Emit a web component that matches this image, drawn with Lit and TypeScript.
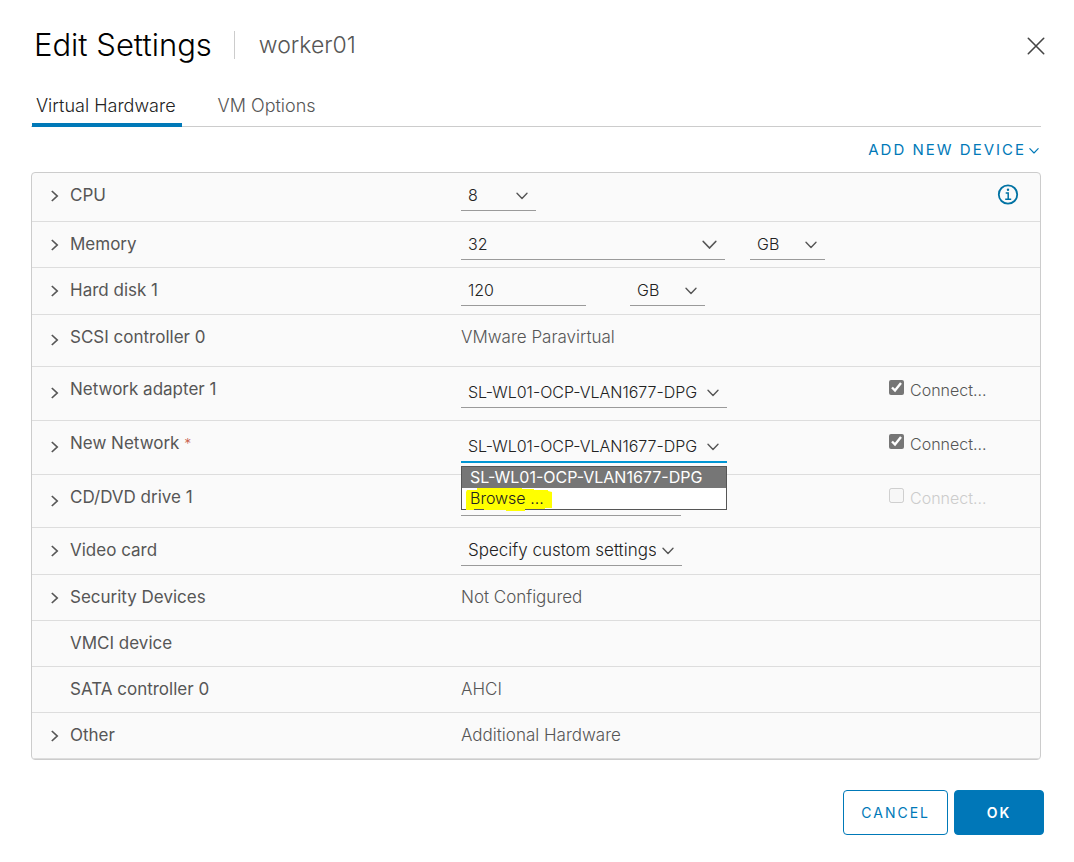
import { LitElement, html, css, nothing, TemplateResult } from "lit";
import { customElement, state } from "lit/decorators.js";
import { classMap } from "lit/directives/class-map.js";

type Row = {
  name: string;
  size: string;
  expandable?: boolean;
  required?: boolean;
  content?: () => TemplateResult;
  aside?: () => TemplateResult;
};

const chevronDown = (cls = "") => html`
  <svg class="caret ${cls}" viewBox="0 0 12 8" aria-hidden="true">
    <path d="M1 1.2 6 6.4 11 1.2" fill="none" stroke="currentColor" stroke-width="1.4" stroke-linecap="round" stroke-linejoin="round" />
  </svg>`;

const select = (id: string, label: string, cls: string, options: string[]) => html`
  <span class="control ${cls}">
    <select id=${id} aria-label=${label}>
      ${options.map((o) => html`<option>${o}</option>`)}
    </select>
    ${chevronDown()}
  </span>`;

const connect = (id: string, checked: boolean, disabled = false) => html`
  <label class=${classMap({ connect: true, disabled })} for=${id}>
    <input type="checkbox" id=${id} .checked=${checked} ?disabled=${disabled} />
    <span>Connect...</span>
  </label>`;

@customElement("app-root")
export class AppRoot extends LitElement {
  @state() private tab = "Virtual Hardware";

  static styles = css`
    :host {
      display: block;
      min-height: 100vh;
      box-sizing: border-box;
      padding: 24px 33px 27px 31px;
      background: #fff;
      color: #565656;
      font: 300 16px/24px Inter, "Open Sans", sans-serif;
    }
    button, input, select {
      font: inherit;
      color: inherit;
      margin: 0;
      padding: 0;
      border: 0;
      border-radius: 0;
      background: none;
    }
    button { cursor: pointer; }
    .header {
      display: flex;
      align-items: center;
      height: 42px;
    }
    h1 {
      margin: 0;
      padding: 0 22px 0 3px;
      font-size: 31px;
      line-height: 42px;
      font-weight: 300;
      color: #000;
    }
    .subject {
      display: flex;
      align-items: center;
      height: 28px;
      padding-left: 24px;
      border-left: 1px solid #ccc;
      font-size: 23px;
    }
    .close {
      display: flex;
      margin-left: auto;
      margin-right: -4px;
      padding-top: 2px;
      color: #454545;
    }
    .close svg { width: 18px; height: 18px; }
    .tabs {
      display: flex;
      gap: 31px;
      margin-top: 18px;
      box-shadow: inset 0 -1px #ccc;
    }
    .tab {
      padding: 10px 6px 5px 4px;
      margin-left: 1px;
      font-size: 18px;
      line-height: 24px;
      border-bottom: 4px solid transparent;
    }
    .tab.active {
      color: #222;
      border-color: #0079b8;
    }
    .toolbar {
      display: flex;
      justify-content: flex-end;
      padding: 11px 2px 10px;
    }
    .add {
      display: flex;
      align-items: center;
      gap: 3px;
      font-size: 15px;
      font-weight: 400;
      letter-spacing: 2px;
      color: #0079b8;
    }
    .add .caret { width: 10px; color: inherit; }
    .panel {
      border: 1px solid #ccc;
      border-radius: 4px;
      background: #fafafa;
    }
    .row {
      display: grid;
      grid-template-columns: 38px 391fr 428fr 151fr;
      min-height: 28px;
      padding-top: 10px;
      border-bottom: 1px solid #ddd;
    }
    .sm { padding-bottom: 7px; }
    .md { padding-bottom: 8px; }
    .lg { padding-bottom: 10px; }
    .xl { padding-bottom: 13px; }
    .net { padding-bottom: 12px; }
    .net .cell { padding-top: 3px; }
    .drive-row { padding-bottom: 11px; }
    .expand {
      align-self: center;
      justify-self: start;
      display: flex;
      margin-left: 18px;
      padding: 0 0 3px;
    }
    .net .expand, .xl .expand { margin-top: 4px; }
    .expand svg { width: 10px; height: 12px; }
    .name {
      grid-column: 2;
      font-size: 17px;
      font-weight: 400;
    }
    .star { color: #c8604c; font-size: 14px; font-weight: 300; }
    .cell {
      display: flex;
      align-items: flex-start;
    }
    .plain, .video { font-size: 17px; }
    .control {
      position: relative;
      display: grid;
      grid-template-columns: 1fr auto;
      align-items: center;
      box-sizing: border-box;
      height: 28px;
      padding-bottom: 3px;
      border-bottom: 1px solid #9a9a9a;
      color: #222;
    }
    .control select, .control input {
      grid-area: 1 / 1 / 2 / 3;
      appearance: none;
      width: 100%;
      min-width: 0;
      height: 24px;
      padding: 0 26px 0 7px;
      outline: 0;
    }
    .caret {
      width: 12px;
      height: 8px;
      margin-top: 1px;
      color: #565656;
    }
    .control .caret {
      grid-area: 1 / 2;
      margin-right: 8px;
      pointer-events: none;
    }
    .control .caret.wide { width: 15px; height: 10px; }
    .unit { width: 75px; }
    .memory { width: 264px; margin-right: 25px; }
    .disk { width: 125px; margin-right: 44px; }
    .network { width: 266px; }
    .focused {
      height: 29px;
      margin-bottom: -1px;
      border-bottom: 2px solid #0095d3;
    }
    .drive { width: 220px; }
    .video { width: 221px; }
    .menu {
      position: absolute;
      z-index: 1;
      top: 32px;
      left: 0;
      right: 0;
      margin: 0;
      padding: 0;
      list-style: none;
      border: 1px solid #565656;
      background: #fff;
      color: #222;
      line-height: 20px;
    }
    .menu li { padding: 0 8px 1px; }
    .menu .chosen {
      background: #767676;
      color: #fff;
      font-weight: 400;
    }
    .browse { display: grid; justify-content: start; }
    .browse svg {
      grid-area: 1 / 1;
      width: 86px;
      height: 23px;
      margin: 0 -8px -3px -4px;
    }
    .browse span { grid-area: 1 / 1; z-index: 1; }
    .connect {
      display: flex;
      align-items: flex-start;
      gap: 6px;
      margin-top: -2px;
    }
    .connect input {
      width: 15px;
      height: 15px;
      margin-top: 2px;
      accent-color: #767676;
    }
    .disabled { color: #ccc; }
    .info {
      display: flex;
      margin-left: auto;
      margin-right: 21px;
      color: #0072a3;
    }
    .info svg { width: 22px; height: 22px; }
    .footer {
      display: flex;
      justify-content: flex-end;
      gap: 6px;
      margin: 30px -3px 0 0;
    }
    .btn {
      min-width: 90px;
      padding: 10px 17px;
      border: 1px solid #0079b8;
      border-radius: 4px;
      font-size: 14px;
      line-height: 23px;
      font-weight: 400;
      letter-spacing: 2px;
      color: #0079b8;
    }
    .primary {
      background: #0077b8;
      color: #fff;
      font-weight: 600;
    }
  `;

  private rows: Row[] = [
    {
      name: "CPU", size: "lg", expandable: true,
      content: () => select("cpu", "CPU", "unit", ["8", "4", "16"]),
      aside: () => html`
        <button class="info" aria-label="CPU information">
          <svg viewBox="0 0 22 22" fill="none" stroke="currentColor" stroke-width="1.8">
            <circle cx="11" cy="11.5" r="9.2" />
            <path d="M8.7 10.1h2.5v6M8.2 16.3h6" stroke-width="1.5" />
            <circle cx="11" cy="6.7" r="1.2" fill="currentColor" stroke="none" />
          </svg>
        </button>`,
    },
    {
      name: "Memory", size: "sm", expandable: true,
      content: () => html`
        <span class="control memory">
          <input type="text" aria-label="Memory" value="32" />
          ${chevronDown("wide")}
        </span>
        ${select("memory-unit", "Memory unit", "unit", ["GB", "MB"])}`,
    },
    {
      name: "Hard disk 1", size: "md", expandable: true,
      content: () => html`
        <span class="control disk"><input type="text" aria-label="Hard disk 1" value="120" /></span>
        ${select("disk-unit", "Hard disk unit", "unit", ["GB", "MB", "TB"])}`,
    },
    { name: "SCSI controller 0", size: "xl", expandable: true, content: () => html`<span class="plain">VMware Paravirtual</span>` },
    {
      name: "Network adapter 1", size: "net", expandable: true,
      content: () => select("net1", "Network adapter 1", "network", ["SL-WL01-OCP-VLAN1677-DPG", "Browse ..."]),
      aside: () => connect("connect1", true),
    },
    {
      name: "New Network", size: "net", expandable: true, required: true,
      content: () => html`
        <span class="control network focused">
          <select id="net2" aria-label="New Network">
            <option>SL-WL01-OCP-VLAN1677-DPG</option>
            <option>Browse ...</option>
          </select>
          ${chevronDown()}
          <ul class="menu" role="listbox" aria-label="New Network">
            <li class="chosen" role="option" aria-selected="true">SL-WL01-OCP-VLAN1677-DPG</li>
            <li class="browse" role="option" aria-selected="false">
              <svg viewBox="0 0 86 23" preserveAspectRatio="none" aria-hidden="true">
                <path d="M1 2h10V0h45v1h12v1h14v1l4 1v16h-7v1H59v2H40v-1H18v-1H8v1H0V4Z" fill="#ff0" />
              </svg>
              <span>Browse ...</span>
            </li>
          </ul>
        </span>`,
      aside: () => connect("connect2", true),
    },
    {
      name: "CD/DVD drive 1", size: "net drive-row", expandable: true,
      content: () => html`<span class="control drive"></span>`,
      aside: () => connect("connect3", false, true),
    },
    {
      name: "Video card", size: "md", expandable: true,
      content: () => select("video", "Video card", "video", ["Specify custom settings", "Auto-detect settings"]),
    },
    { name: "Security Devices", size: "sm", expandable: true, content: () => html`<span class="plain">Not Configured</span>` },
    { name: "VMCI device", size: "sm" },
    { name: "SATA controller 0", size: "sm", content: () => html`<span class="plain">AHCI</span>` },
    { name: "Other", size: "sm", expandable: true, content: () => html`<span class="plain">Additional Hardware</span>` },
  ];

  private renderRow(row: Row) {
    return html`
      <div class="row ${row.size}">
        ${row.expandable
          ? html`<button class="expand" aria-label="Expand ${row.name}">
              <svg viewBox="0 0 10 12" fill="none" stroke="currentColor" stroke-width="1.7">
                <path d="M1.8 1 7.2 6 1.8 11" />
              </svg>
            </button>`
          : nothing}
        <div class="name">${row.name}${row.required ? html` <span class="star">*</span>` : nothing}</div>
        <div class="cell">${row.content?.() ?? nothing}</div>
        <div class="cell">${row.aside?.() ?? nothing}</div>
      </div>`;
  }

  render() {
    return html`
      <div class="header">
        <h1>Edit Settings</h1>
        <div class="subject">worker01</div>
        <button class="close" aria-label="Close">
          <svg viewBox="0 0 18 18" fill="none" stroke="currentColor" stroke-width="1.6" stroke-linecap="round">
            <path d="M1.3 1.3 16.7 16.7M16.7 1.3 1.3 16.7" />
          </svg>
        </button>
      </div>
      <div class="tabs" role="tablist">
        ${["Virtual Hardware", "VM Options"].map((t) => html`
          <button role="tab" aria-selected=${t === this.tab}
            class=${classMap({ tab: true, active: t === this.tab })}
            @click=${() => (this.tab = t)}>${t}</button>`)}
      </div>
      <div class="toolbar">
        <button class="add"><span>ADD NEW DEVICE</span>${chevronDown()}</button>
      </div>
      <div class="panel">${this.rows.map((r) => this.renderRow(r))}</div>
      <div class="footer">
        <button class="btn">CANCEL</button>
        <button class="btn primary">OK</button>
      </div>`;
  }
}
